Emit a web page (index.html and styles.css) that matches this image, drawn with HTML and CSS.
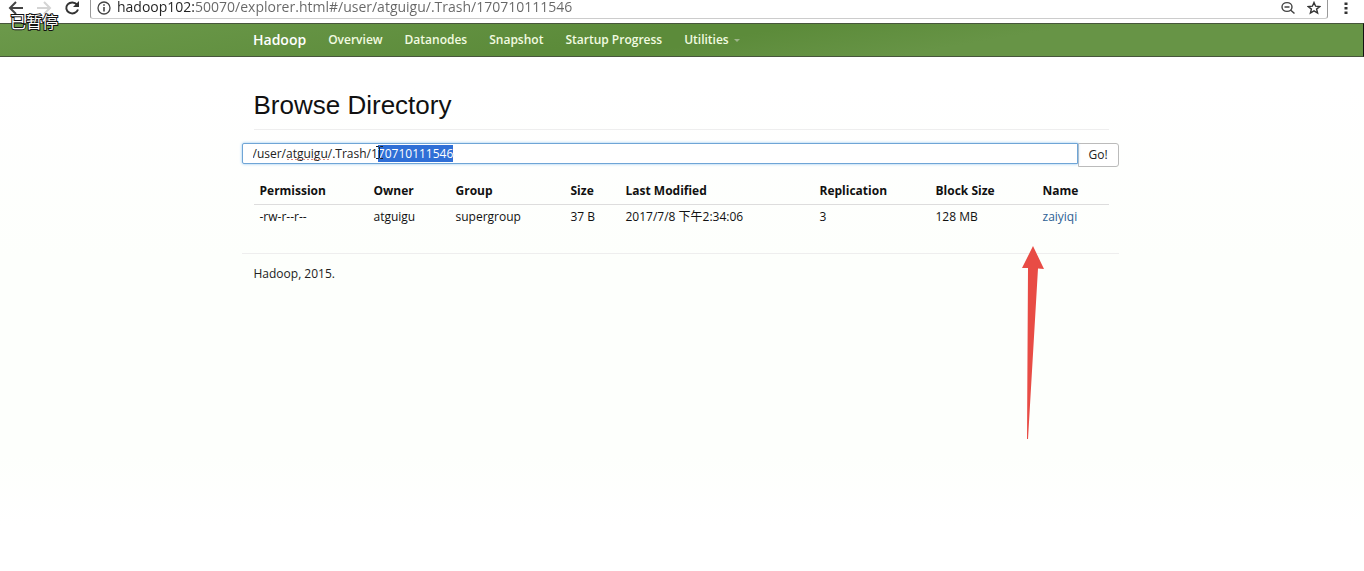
FILE: index.html
```
<!DOCTYPE html>
<html lang="en">
<head>
    <meta charset="UTF-8">
    <meta name="viewport" content="width=device-width, initial-scale=1.0">
    <title>Browsing HDFS</title>
    <link rel="stylesheet" href="styles.css">
</head>
<body>

<div class="toolbar">
    <button class="tool" type="button" aria-label="Back">
        <svg width="16" height="16" viewBox="0 0 16 16"><path d="M15 8H2M8 2L2 8l6 6" fill="none" stroke="#444" stroke-width="2"/></svg>
    </button>
    <button class="tool" type="button" aria-label="Forward" disabled>
        <svg width="16" height="16" viewBox="0 0 16 16"><path d="M1 8h13M8 2l6 6-6 6" fill="none" stroke="#d4d4d4" stroke-width="2"/></svg>
    </button>
    <button class="tool" type="button" aria-label="Reload">
        <svg width="16" height="16" viewBox="0 0 16 16"><path d="M13 4.5A6 5.5 0 1 0 14 9.5" fill="none" stroke="#333" stroke-width="2"/><path d="M15 1v6H9z" fill="#333"/></svg>
    </button>
    <div class="address">
        <svg width="14" height="14" viewBox="0 0 14 14"><circle cx="7" cy="7" r="6" fill="none" stroke="#444" stroke-width="1.3"/><path d="M7 6v4.5M7 3.2v1.6" stroke="#444" stroke-width="1.6"/></svg>
        <input class="url" type="text" aria-label="Address" spellcheck="false" value="hadoop102:50070/explorer.html#/user/atguigu/.Trash/170710111546">
        <button class="tool" type="button" aria-label="Zoom">
            <svg width="14" height="14" viewBox="0 0 14 14"><ellipse cx="6" cy="6" rx="5" ry="4.4" fill="none" stroke="#444" stroke-width="1.4"/><path d="M3.5 6h5M9.5 9l4 3.5" stroke="#444" stroke-width="1.5"/></svg>
        </button>
        <button class="tool" type="button" aria-label="Bookmark">
            <svg width="14" height="14" viewBox="0 0 14 14"><path d="M7 1.5l1.6 3.7 4.2.3-3.2 2.6 1 4L7 9.9l-3.6 2.2 1-4L1.2 5.5l4.2-.3z" fill="none" stroke="#333" stroke-width="1.4"/></svg>
        </button>
    </div>
    <button class="tool menu" type="button" aria-label="Menu">
        <svg width="4" height="14" viewBox="0 0 4 14"><path d="M.5 1.5h3v2.4h-3zM.5 6h3v2.4h-3zM.5 10.5h3v2.4h-3z" fill="#333"/></svg>
    </button>
    <span class="paused">已暂停</span>
</div>

<nav class="navbar">
    <div class="container nav-inner">
        <a class="brand" href="#">Hadoop</a>
        <a href="#">Overview</a>
        <a href="#">Datanodes</a>
        <a href="#">Snapshot</a>
        <a href="#">Startup Progress</a>
        <a href="#">Utilities <span class="caret"></span></a>
    </div>
</nav>

<div class="page">
<main class="container">
    <h1>Browse Directory</h1>

    <form class="path-form">
        <div class="path-box">
            <input type="text" id="directory" aria-label="Directory" spellcheck="false" value="/user/atguigu/.Trash/170710111546">
            <span class="squiggle"></span>
            <svg class="cursor" width="7" height="13" viewBox="0 0 7 13"><path d="M0 .5h2.5l1 1 1-1H7M3.5 1v11M0 12.5h2.5l1-1 1 1H7" fill="none" stroke="#222"/></svg>
        </div>
        <button class="go" type="button">Go!</button>
    </form>

    <table>
        <colgroup>
            <col class="c-perm"><col class="c-owner"><col class="c-group"><col class="c-size">
            <col class="c-date"><col class="c-repl"><col class="c-block"><col>
        </colgroup>
        <thead>
            <tr>
                <th>Permission</th>
                <th>Owner</th>
                <th>Group</th>
                <th>Size</th>
                <th>Last Modified</th>
                <th>Replication</th>
                <th>Block Size</th>
                <th>Name</th>
            </tr>
        </thead>
        <tbody>
            <tr>
                <td>-rw-r--r--</td>
                <td>atguigu</td>
                <td>supergroup</td>
                <td>37 B</td>
                <td>2017/7/8 下午2:34:06</td>
                <td>3</td>
                <td>128 MB</td>
                <td class="name"><a href="#">zaiyiqi</a>
                    <svg class="arrow" width="22" height="194" viewBox="0 0 22 194"><path d="M11 0l11 23-6-.5L6 193H5L6 22H0z" fill="#e84c45"/></svg>
                </td>
            </tr>
        </tbody>
    </table>

    <footer>Hadoop, 2015.</footer>
</main>
</div>

<script>
    const directory = document.getElementById('directory');
    directory.focus();
    directory.setSelectionRange(22, directory.value.length);
</script>

</body>
</html>
```
FILE: styles.css
```
* { box-sizing: border-box; }
body {
    margin: 0;
    min-height: 100vh;
    font-family: "Open Sans", "Noto Sans CJK SC", sans-serif;
    font-size: 12px;
    line-height: 16px;
    color: #222;
    background: linear-gradient(#fff 15%, #fdfffc 45%, #fdfffc 80%, #fff 92%);
}
button, input { font: inherit; color: inherit; }
a { text-decoration: none; }

/* Browser toolbar */
.toolbar {
    position: relative;
    display: flex;
    align-items: flex-start;
    gap: 12px;
    height: 23px;
    padding-left: 8px;
    background: #fff;
}
.tool {
    display: flex;
    padding: 0;
    border: none;
    background: none;
}
.address {
    flex: 1;
    display: flex;
    gap: 12px;
    height: 19px;
    margin-left: -2px;
    padding: 1px 6px;
    border: 1px solid #999;
    border-bottom-color: #ccc;
    border-top: none;
    border-radius: 0 0 3px 3px;
}
.url {
    flex: 1;
    height: 18px;
    margin: -3px 0 0 -6px;
    padding: 0;
    border: none;
    outline: none;
    font-size: 14px;
    line-height: 18px;
    color: transparent;
    /* host part is darker than the rest of the address */
    background: linear-gradient(to right, #222 77px, #666 77px);
    background-clip: text;
    -webkit-background-clip: text;
}
.menu { width: 24px; padding: 1px 4px; }
.paused {
    position: absolute;
    left: 10px;
    top: 14px;
    z-index: 1;
    font-size: 16px;
    color: #fff;
    -webkit-text-stroke: 2px #111;
    paint-order: stroke fill;
}

/* Navbar */
.navbar {
    height: 34px;
    padding-right: 4px;
    border: 1px solid #47563c;
    border-left: none;
    border-right-color: #111;
    background: linear-gradient(170deg, #6c994b, #5c8b3a 45%, #5c8b3a 52%, #679446 70%, #679446);
}
.page { padding-right: 4px; }
.container {
    max-width: 877px;
    margin: 0 auto;
}
.nav-inner {
    display: flex;
    align-items: center;
    gap: 22px;
    height: 32px;
    padding-left: 12px;
}
.nav-inner a { color: #f2fbe0; font-weight: 600; }
.nav-inner .brand { font-size: 14px; color: #fff; }
.caret {
    display: inline-block;
    margin-left: 2px;
    vertical-align: middle;
    border: 3px solid transparent;
    border-top-color: #9fb68c;
    border-bottom: none;
}

/* Directory listing */
h1 {
    margin: 32px 10px 13px 12px;
    padding-bottom: 8px;
    border-bottom: 1px solid #eee;
    font: 26px/32px "Liberation Sans", sans-serif;
    color: #111;
}
.path-form {
    display: flex;
    align-items: flex-start;
}
.path-box {
    position: relative;
    flex: 1;
}
#directory {
    display: block;
    width: 100%;
    height: 21px;
    padding: 0 10px;
    border: 1px solid #6fa5d6;
    border-radius: 2px 0 0 2px;
    outline: none;
    background: #fff;
    box-shadow: 0 0 3px #8fc4f0;
}
#directory::selection {
    color: #fff;
    background: #2f6fd6;
    -webkit-text-stroke: 1px #fff;
}
.squiggle {
    position: absolute;
    left: 45px;
    top: 16px;
    width: 42px;
    height: 1px;
    background: repeating-linear-gradient(to right, #d98a80 0 2px, transparent 2px 4px);
}
.cursor {
    position: absolute;
    left: 134px;
    top: 3px;
}
.go {
    width: 41px;
    height: 24px;
    padding: 0;
    border: 1px solid #bbb;
    border-radius: 0 3px 3px 0;
    background: #fff;
}
table {
    width: calc(100% - 22px);
    margin: 12px 10px 0 12px;
    table-layout: fixed;
    border-collapse: collapse;
    color: #111;
}
th, td {
    height: 25px;
    padding: 4px 0 4px 6px;
    text-align: left;
    white-space: nowrap;
}
th { border-bottom: 1px solid #ddd; }
.c-perm { width: 114px; }
.c-owner { width: 82px; }
.c-group { width: 115px; }
.c-size { width: 55px; }
.c-date { width: 194px; }
.c-repl { width: 116px; }
.c-block { width: 107px; }
.name { position: relative; }
.name a { color: #2d5f94; }
.arrow {
    position: absolute;
    left: -15px;
    top: 41px;
}
footer {
    margin-top: 24px;
    padding: 12px;
    border-top: 1px solid #eee;
}
```
